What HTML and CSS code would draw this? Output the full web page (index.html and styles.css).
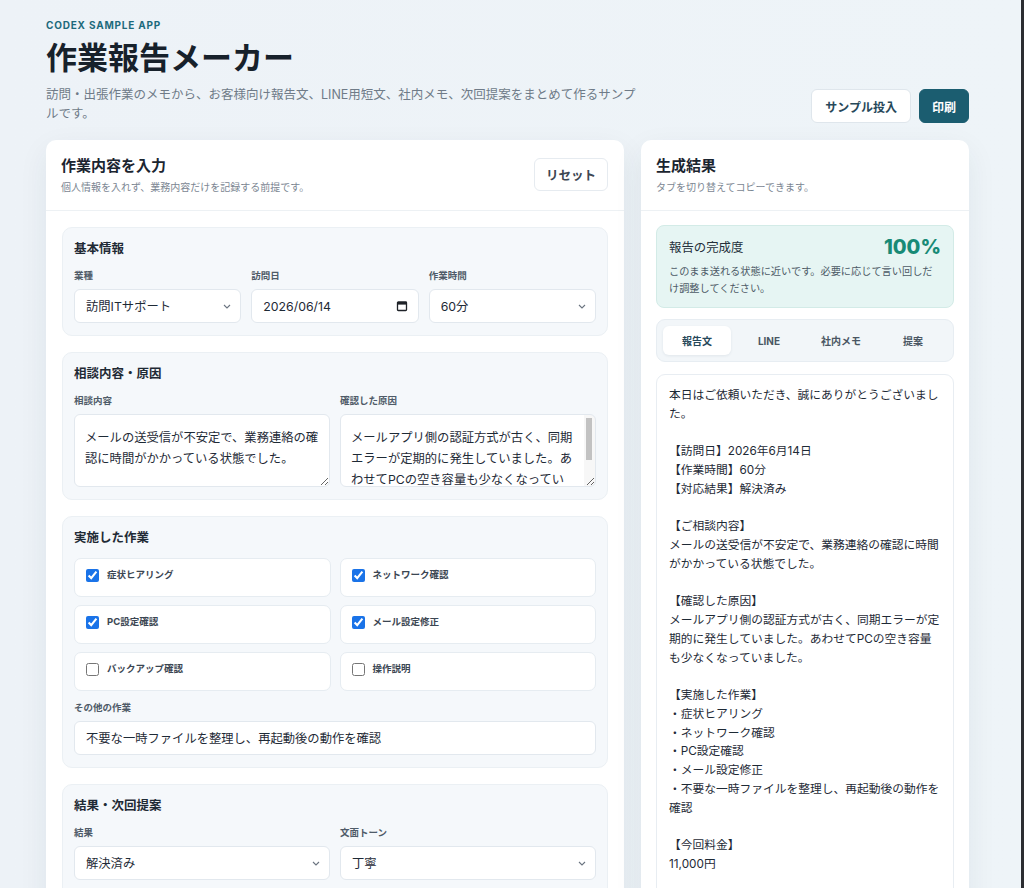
FILE: index.html
```html
<!DOCTYPE html>
<html lang="ja">
	<head>
		<meta charset="UTF-8" />
		<meta name="viewport" content="width=device-width, initial-scale=1.0" />
		<title>作業報告メーカー</title>
		<link rel="stylesheet" href="styles.css">
	</head>
	<body>
		<div class="page">
			<header class="top">
				<div class="intro">
					<p class="eyebrow">CODEX SAMPLE APP</p>
					<h1>作業報告メーカー</h1>
					<p class="lead">訪問・出張作業のメモから、お客様向け報告文、LINE用短文、社内メモ、次回提案をまとめて作るサンプルです。</p>
				</div>
				<div class="top-actions">
					<button class="btn">サンプル投入</button>
					<button class="btn btn-primary">印刷</button>
				</div>
			</header>

			<div class="layout">
				<section class="panel">
					<div class="panel-head">
						<div>
							<h2>作業内容を入力</h2>
							<p>個人情報を入れず、業務内容だけを記録する前提です。</p>
						</div>
						<button class="btn">リセット</button>
					</div>

					<div class="panel-body">
						<div class="group">
							<h3>基本情報</h3>
							<div class="cols cols-3">
								<label class="field">
									<span class="field-label">業種</span>
									<div class="select">
										<select>
											<option>訪問ITサポート</option>
											<option>家電設置</option>
											<option>清掃</option>
										</select>
										<svg viewBox="0 0 8 5"><path d="M1 1l3 3 3-3" /></svg>
									</div>
								</label>
								<label class="field">
									<span class="field-label">訪問日</span>
									<div class="date">
										<input type="text" value="2026/06/14">
										<svg viewBox="0 0 12 12"><rect x="1.5" y="2" width="9" height="8.5" rx="0.8" /><rect class="fill" x="1.5" y="2" width="9" height="2.6" /></svg>
									</div>
								</label>
								<label class="field">
									<span class="field-label">作業時間</span>
									<div class="select">
										<select>
											<option>60分</option>
											<option>30分</option>
											<option>90分</option>
										</select>
										<svg viewBox="0 0 8 5"><path d="M1 1l3 3 3-3" /></svg>
									</div>
								</label>
							</div>
						</div>

						<div class="group">
							<h3>相談内容・原因</h3>
							<div class="cols cols-2">
								<label class="field">
									<span class="field-label">相談内容</span>
									<textarea>メールの送受信が不安定で、業務連絡の確認に時間がかかっている状態でした。</textarea>
								</label>
								<label class="field">
									<span class="field-label">確認した原因</span>
									<textarea class="scroll">メールアプリ側の認証方式が古く、同期エラーが定期的に発生していました。あわせてPCの空き容量も少なくなっていました。</textarea>
								</label>
							</div>
						</div>

						<div class="group">
							<h3>実施した作業</h3>
							<div class="checks">
								<label class="check"><input type="checkbox" checked> 症状ヒアリング</label>
								<label class="check"><input type="checkbox" checked> ネットワーク確認</label>
								<label class="check"><input type="checkbox" checked> PC設定確認</label>
								<label class="check"><input type="checkbox" checked> メール設定修正</label>
								<label class="check"><input type="checkbox"> バックアップ確認</label>
								<label class="check"><input type="checkbox"> 操作説明</label>
							</div>
							<label class="field">
								<span class="field-label">その他の作業</span>
								<input type="text" value="不要な一時ファイルを整理し、再起動後の動作を確認">
							</label>
						</div>

						<div class="group">
							<h3>結果・次回提案</h3>
							<div class="cols cols-2">
								<label class="field">
									<span class="field-label">結果</span>
									<div class="select">
										<select>
											<option>解決済み</option>
											<option>経過観察</option>
											<option>再訪問が必要</option>
										</select>
										<svg viewBox="0 0 8 5"><path d="M1 1l3 3 3-3" /></svg>
									</div>
								</label>
								<label class="field">
									<span class="field-label">文面トーン</span>
									<div class="select">
										<select>
											<option>丁寧</option>
											<option>簡潔</option>
										</select>
										<svg viewBox="0 0 8 5"><path d="M1 1l3 3 3-3" /></svg>
									</div>
								</label>
							</div>
							<label class="field next">
								<span class="field-label">次回提案</span>
								<textarea>定期的なバックアップ設定と、PCの容量整理をおすすめします。</textarea>
							</label>
						</div>
					</div>
				</section>

				<section class="panel">
					<div class="panel-head">
						<div>
							<h2>生成結果</h2>
							<p>タブを切り替えてコピーできます。</p>
						</div>
					</div>

					<div class="panel-body result-body">
						<div class="score">
							<div class="score-row">
								<span>報告の完成度</span>
								<strong>100%</strong>
							</div>
							<p>このまま送れる状態に近いです。必要に応じて言い回しだけ調整してください。</p>
						</div>

						<div class="tabs">
							<button class="tab active">報告文</button>
							<button class="tab">LINE</button>
							<button class="tab">社内メモ</button>
							<button class="tab">提案</button>
						</div>

						<div class="output">本日はご依頼いただき、誠にありがとうございました。

【訪問日】2026年6月14日
【作業時間】60分
【対応結果】解決済み

【ご相談内容】
メールの送受信が不安定で、業務連絡の確認に時間がかかっている状態でした。

【確認した原因】
メールアプリ側の認証方式が古く、同期エラーが定期的に発生していました。あわせてPCの空き容量も少なくなっていました。

【実施した作業】
・症状ヒアリング
・ネットワーク確認
・PC設定確認
・メール設定修正
・不要な一時ファイルを整理し、再起動後の動作を確認

【今回料金】
11,000円

【次回のご提案】
定期的なバックアップ設定と、PCの容量整理をおすすめします。</div>
					</div>
				</section>
			</div>
		</div>
	</body>
</html>
```

FILE: styles.css
```css
* {
	box-sizing: border-box;
	margin: 0;
	padding: 0;
}

html {
	scrollbar-width: none;
}

body {
	background: linear-gradient(to right, #edf2f7, #eef4f8);
	color: #1e2a36;
	font-family: "Inter", "Noto Sans CJK JP", sans-serif;
	min-height: 100vh;
}

/* window edge on the right */
body::after {
	content: "";
	position: fixed;
	top: 0;
	right: 0;
	width: 3px;
	height: 100%;
	background: #2b2d31;
}

button,
input,
select,
textarea {
	font-family: inherit;
}

.page {
	width: 923px;
	margin-left: 46px;
	padding: 18px 0 40px;
}

.top {
	display: flex;
	justify-content: space-between;
	align-items: flex-end;
	margin-bottom: 17px;
}

.eyebrow {
	font-size: 10px;
	line-height: 14px;
	font-weight: 700;
	letter-spacing: 0.08em;
	color: #1d6a7c;
}

h1 {
	margin-top: 6px;
	font-size: 31px;
	line-height: 40px;
	font-weight: 700;
	color: #17212b;
}

.lead {
	margin-top: 7px;
	max-width: 595px;
	font-size: 12.5px;
	line-height: 19px;
	color: #6f7b88;
}

.top-actions {
	display: flex;
	gap: 8px;
}

.btn {
	height: 34px;
	padding: 0 13px;
	border: 1px solid #dfe6ec;
	border-radius: 6px;
	background: #fff;
	color: #27485a;
	font-size: 12px;
	font-weight: 700;
	cursor: pointer;
}

.btn-primary {
	background: #1b5d70;
	border-color: #1b5d70;
	color: #fff;
	padding: 0 12px;
}

.layout {
	display: grid;
	grid-template-columns: 578px 328px;
	gap: 17px;
	align-items: start;
}

.panel {
	background: #fff;
	border-radius: 10px;
	box-shadow: 0 10px 30px rgba(30, 52, 74, 0.07);
}

.panel-head {
	display: flex;
	justify-content: space-between;
	align-items: center;
	padding: 15px 16px 16px 15px;
	border-bottom: 1px solid #edf1f4;
}

.panel-head h2 {
	font-size: 15px;
	line-height: 21px;
	font-weight: 700;
	color: #1b2530;
}

.panel-head p {
	margin-top: 4px;
	font-size: 10px;
	line-height: 14px;
	color: #7b8692;
}

.panel-head .btn {
	height: 33px;
	width: 74px;
	padding: 0;
	font-size: 12.5px;
	color: #3d4753;
	border-color: #e6ebf0;
}

.panel-body {
	padding: 16px;
	display: flex;
	flex-direction: column;
	gap: 16px;
}

.group {
	background: #f5f8fb;
	border: 1px solid #ebf0f4;
	border-radius: 10px;
	padding: 13px 11px 12px;
}

.group h3 {
	font-size: 12.5px;
	line-height: 16px;
	font-weight: 700;
	color: #1f2a35;
	margin-bottom: 12px;
}

.cols {
	display: grid;
	gap: 10px;
}

.cols-3 {
	grid-template-columns: repeat(3, 1fr);
}

.cols-2 {
	grid-template-columns: repeat(2, 1fr);
}

.field {
	display: block;
}

.field-label {
	display: block;
	font-size: 9.5px;
	line-height: 13px;
	font-weight: 700;
	color: #4f5b68;
	margin-bottom: 7px;
}

.field input,
.field select,
.field textarea {
	display: block;
	width: 100%;
	border: 1px solid #e2e8ee;
	border-radius: 6px;
	background: #fff;
	color: #1e2a36;
	font-size: 12.3px;
	outline: none;
}

.field input,
.field select {
	height: 34px;
	padding: 0 11px;
}

.field select {
	appearance: none;
	padding-right: 26px;
}

.field textarea {
	height: 73px;
	padding: 12px 10px;
	line-height: 21px;
	resize: vertical;
}

/* long text: leave room for the scroll track drawn on the right */
.field textarea.scroll {
	overflow-y: auto;
	padding-right: 20px;
	background:
		linear-gradient(#c2c2c2, #c2c2c2) right 3px top 3px / 6px 42px no-repeat,
		linear-gradient(#f7f7f7, #f7f7f7) right top / 11px 100% no-repeat,
		#fff;
}

.select,
.date {
	position: relative;
}

.select svg {
	position: absolute;
	right: 10px;
	top: 15px;
	width: 8px;
	height: 5px;
	fill: none;
	stroke: #6b7480;
	stroke-width: 1.1;
	pointer-events: none;
}

.date svg {
	position: absolute;
	right: 11px;
	top: 11px;
	width: 12px;
	height: 12px;
	fill: none;
	stroke: #1e2228;
	stroke-width: 1.3;
	pointer-events: none;
}

.date svg .fill {
	fill: #1e2228;
	stroke: none;
}

.checks {
	display: grid;
	grid-template-columns: repeat(2, 1fr);
	gap: 8px 9px;
	margin-bottom: 10px;
}

.check {
	display: flex;
	align-items: flex-start;
	gap: 8px;
	height: 39px;
	padding: 10px 11px;
	background: #fff;
	border: 1px solid #e6ecf1;
	border-radius: 7px;
	font-size: 9.5px;
	line-height: 12px;
	font-weight: 700;
	color: #3b4652;
}

.check input {
	width: 13px;
	height: 13px;
	accent-color: #1a73e8;
	flex-shrink: 0;
}

.next {
	margin-top: 12px;
}

.result-body {
	padding: 14px 15px 16px;
	gap: 0;
}

.score {
	background: #e6f5f3;
	border: 1px solid #d3ebe7;
	border-radius: 8px;
	padding: 11px 12px 10px;
}

.score-row {
	display: flex;
	justify-content: space-between;
	align-items: center;
	height: 20px;
}

.score-row span {
	font-size: 12.4px;
	color: #24303b;
}

.score-row strong {
	font-size: 20px;
	font-weight: 800;
	color: #178a76;
}

.score p {
	margin-top: 6px;
	font-size: 10.2px;
	line-height: 17px;
	color: #4d5a66;
}

.tabs {
	margin-top: 11px;
	display: grid;
	grid-template-columns: repeat(4, 1fr);
	gap: 4px;
	padding: 6px;
	background: #f2f6f9;
	border: 1px solid #e7edf2;
	border-radius: 9px;
}

.tab {
	height: 29px;
	border: none;
	border-radius: 6px;
	background: none;
	font-size: 10px;
	font-weight: 700;
	color: #4a5663;
	cursor: pointer;
}

.tab.active {
	background: #fff;
	color: #27485a;
	box-shadow: 0 1px 3px rgba(30, 52, 74, 0.08);
}

.output {
	margin-top: 12px;
	padding: 11px 12px;
	border: 1px solid #e8edf2;
	border-radius: 9px;
	white-space: pre-wrap;
	font-size: 11.75px;
	line-height: 18.75px;
	color: #1e2a36;
}
```
